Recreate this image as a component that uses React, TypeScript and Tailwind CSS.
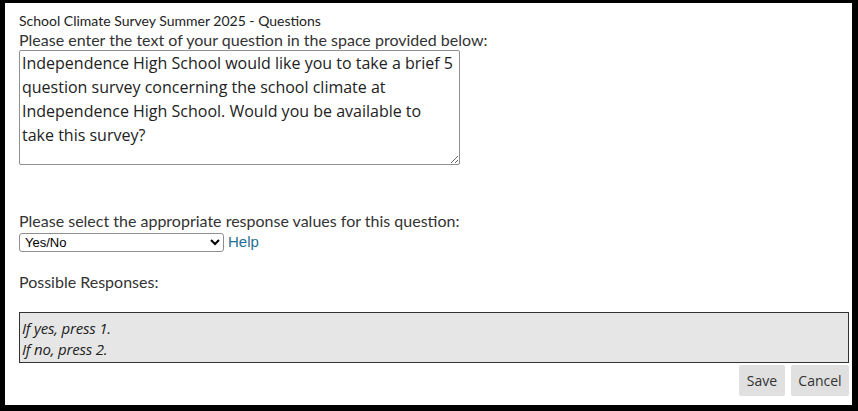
import { useState } from 'react';

export default function App() {
  const [text, setText] = useState(
    'Independence High School would like you to take a brief 5 question survey concerning the school climate at Independence High School. Would you be available to take this survey?'
  );
  const [value, setValue] = useState('yesno');

  return (
    <div className="w-[858px] h-[411px] bg-black pt-[3px] pl-[5px] pr-[6px] pb-[6px]">
      <div className="h-full bg-white flex flex-col pl-[14px] pr-[3px] text-[#333]" style={{ fontFamily: 'Lato, "Noto Sans", sans-serif' }}>
        <div className="pt-[10px] text-[14px] leading-[16px] text-[#222]">
          School Climate Survey Summer 2025 - Questions
        </div>
        <label className="mt-[2px] text-[16px] leading-[18px]">
          Please enter the text of your question in the space provided below:
        </label>
        <textarea
          value={text}
          onChange={(e) => setText(e.target.value)}
          className="mt-[1px] w-[441px] h-[115px] border border-[#8f8f8f] rounded-[2px] px-[2px] py-0 text-[16px] leading-[24px] text-[#222] resize-y outline-none"
          style={{ fontFamily: '"Open Sans", "Noto Sans", sans-serif' }}
        />
        <label className="mt-[47px] text-[16px] leading-[18px]">
          Please select the appropriate response values for this question:
        </label>
        <div className="flex items-center gap-[4px] mt-[1px]">
          <select
            value={value}
            onChange={(e) => setValue(e.target.value)}
            className="w-[205px] h-[19px] border border-[#8f8f8f] rounded-[3px] text-[13px] leading-[15px] text-black bg-white px-[1px]"
            style={{ fontFamily: '"Liberation Sans", Arial, sans-serif' }}
          >
            <option value="yesno">Yes/No</option>
            <option value="scale">1 - 5 Scale</option>
            <option value="custom">Custom</option>
          </select>
          <a href="#" className="text-[15px] text-[#1f6f93]" style={{ fontFamily: '"Liberation Sans", Arial, sans-serif' }}>
            Help
          </a>
        </div>
        <div className="mt-[19px] text-[16px] leading-[18px]">Possible Responses:</div>
        <div
          className="mt-[21px] h-[51px] bg-[#e6e6e6] border border-[#333] pl-[2px] pt-[5px] italic text-[15px] leading-[21px] tracking-[-0.2px] text-[#222]"
          style={{ fontFamily: '"Open Sans", "Noto Sans", sans-serif' }}
        >
          <div>If yes, press 1.</div>
          <div>If no, press 2.</div>
        </div>
        <div className="flex justify-end gap-[6px] mt-[2px]" style={{ fontFamily: '"Open Sans", "Noto Sans", sans-serif' }}>
          <button className="h-[31px] w-[46px] bg-[#e0e0e0] rounded-[2px] text-[14px] text-[#333]">Save</button>
          <button className="h-[31px] w-[58px] bg-[#e0e0e0] rounded-[2px] text-[14px] text-[#333]">Cancel</button>
        </div>
      </div>
    </div>
  );
}
